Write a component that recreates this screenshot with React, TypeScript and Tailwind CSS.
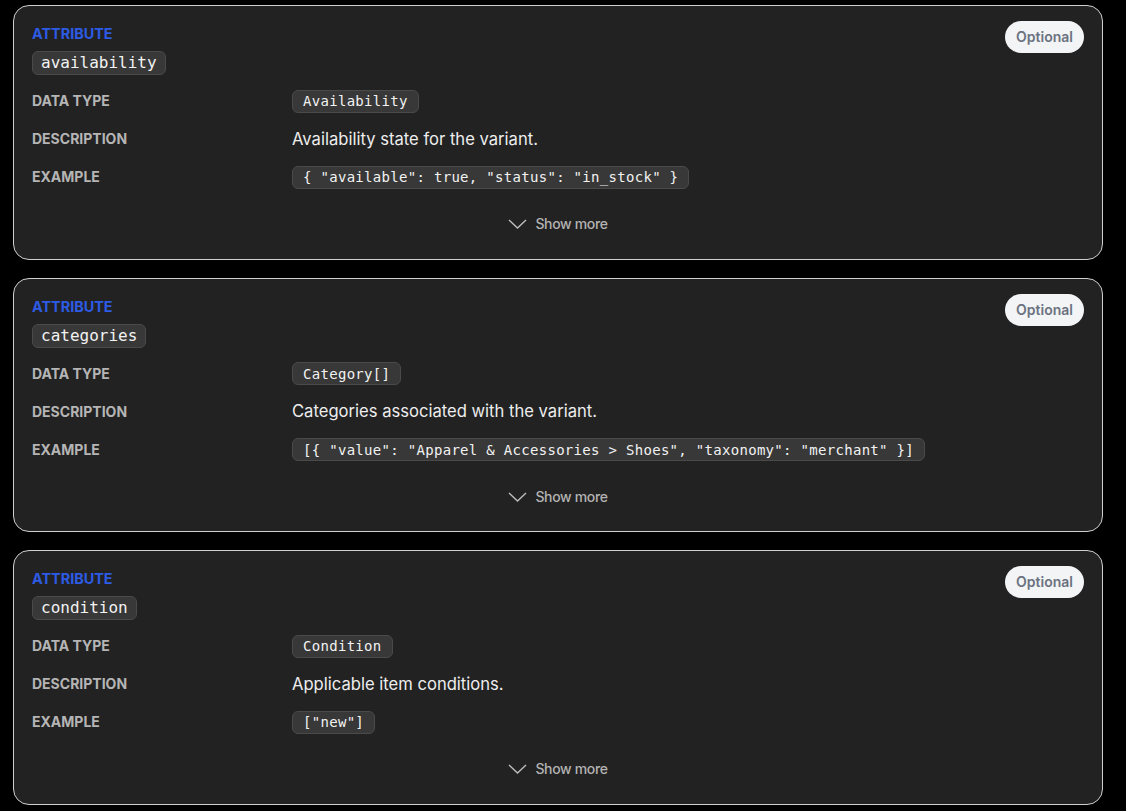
import React from 'react';

type Attr = {
  name: string;
  type: string;
  description: string;
  example: string;
};

const attributes: Attr[] = [
  {
    name: 'availability',
    type: 'Availability',
    description: 'Availability state for the variant.',
    example: '{ "available": true, "status": "in_stock" }',
  },
  {
    name: 'categories',
    type: 'Category[]',
    description: 'Categories associated with the variant.',
    example: '[{ "value": "Apparel & Accessories > Shoes", "taxonomy": "merchant" }]',
  },
  {
    name: 'condition',
    type: 'Condition',
    description: 'Applicable item conditions.',
    example: '["new"]',
  },
];

const mono = "font-['DejaVu_Sans_Mono',monospace]";

const Code = ({ children, big }: { children: React.ReactNode; big?: boolean }) => (
  <span
    className={`${mono} inline-flex items-center whitespace-pre rounded-md border border-[#4a4a4a] bg-[#383838] text-[#f2f2f2] ${
      big ? 'h-6 px-2 text-base' : 'h-[23px] px-[10px] text-sm tracking-[0.3px]'
    }`}
  >
    {children}
  </span>
);

const Row = ({ label, children }: { label: string; children: React.ReactNode }) => (
  <>
    <div className="flex h-6 items-center text-sm font-bold text-[#b5b5b5]">{label}</div>
    <div className="flex h-6 items-center">{children}</div>
  </>
);

const Card = ({ attr }: { attr: Attr }) => (
  <div className="rounded-2xl border border-[#cfcfcf] bg-[#222222] px-[18px] pt-[18px] pb-[24.5px]">
    <div className="flex items-start justify-between">
      <div className="flex flex-col items-start">
        <span className="text-[14.4px] font-bold leading-5 text-[#2d5be3]">ATTRIBUTE</span>
        <div className="mt-[6px]">
          <Code big>{attr.name}</Code>
        </div>
      </div>
      <span className="mt-[-3px] flex h-8 items-center rounded-full bg-[#f3f4f6] px-[11px] text-sm font-semibold text-[#6b7280]">
        Optional
      </span>
    </div>
    <div className="mt-[14px] grid grid-cols-[260px_1fr] gap-y-[14px]">
      <Row label="DATA TYPE">
        <Code>{attr.type}</Code>
      </Row>
      <Row label="DESCRIPTION">
        <span className="text-[16.6px] text-[#ededed]">{attr.description}</span>
      </Row>
      <Row label="EXAMPLE">
        <Code>{attr.example}</Code>
      </Row>
    </div>
    <div className="mt-[25px] flex justify-center">
      <button className="flex h-5 items-center gap-2 text-sm font-medium tracking-tight text-[#b3b3b3]">
        <svg width="19" height="10" viewBox="0 0 19 10" fill="none" stroke="#bdbdbd" strokeWidth="1.4">
          <path d="M1 1l8.5 8 8.5-8" />
        </svg>
        Show more
      </button>
    </div>
  </div>
);

export default function App() {
  return (
    <div className="min-h-screen bg-black px-[13px] pt-[5px] font-['Inter',sans-serif]">
      <div className="flex w-[1090px] flex-col gap-[18px]">
        {attributes.map((a) => (
          <Card key={a.name} attr={a} />
        ))}
      </div>
    </div>
  );
}
